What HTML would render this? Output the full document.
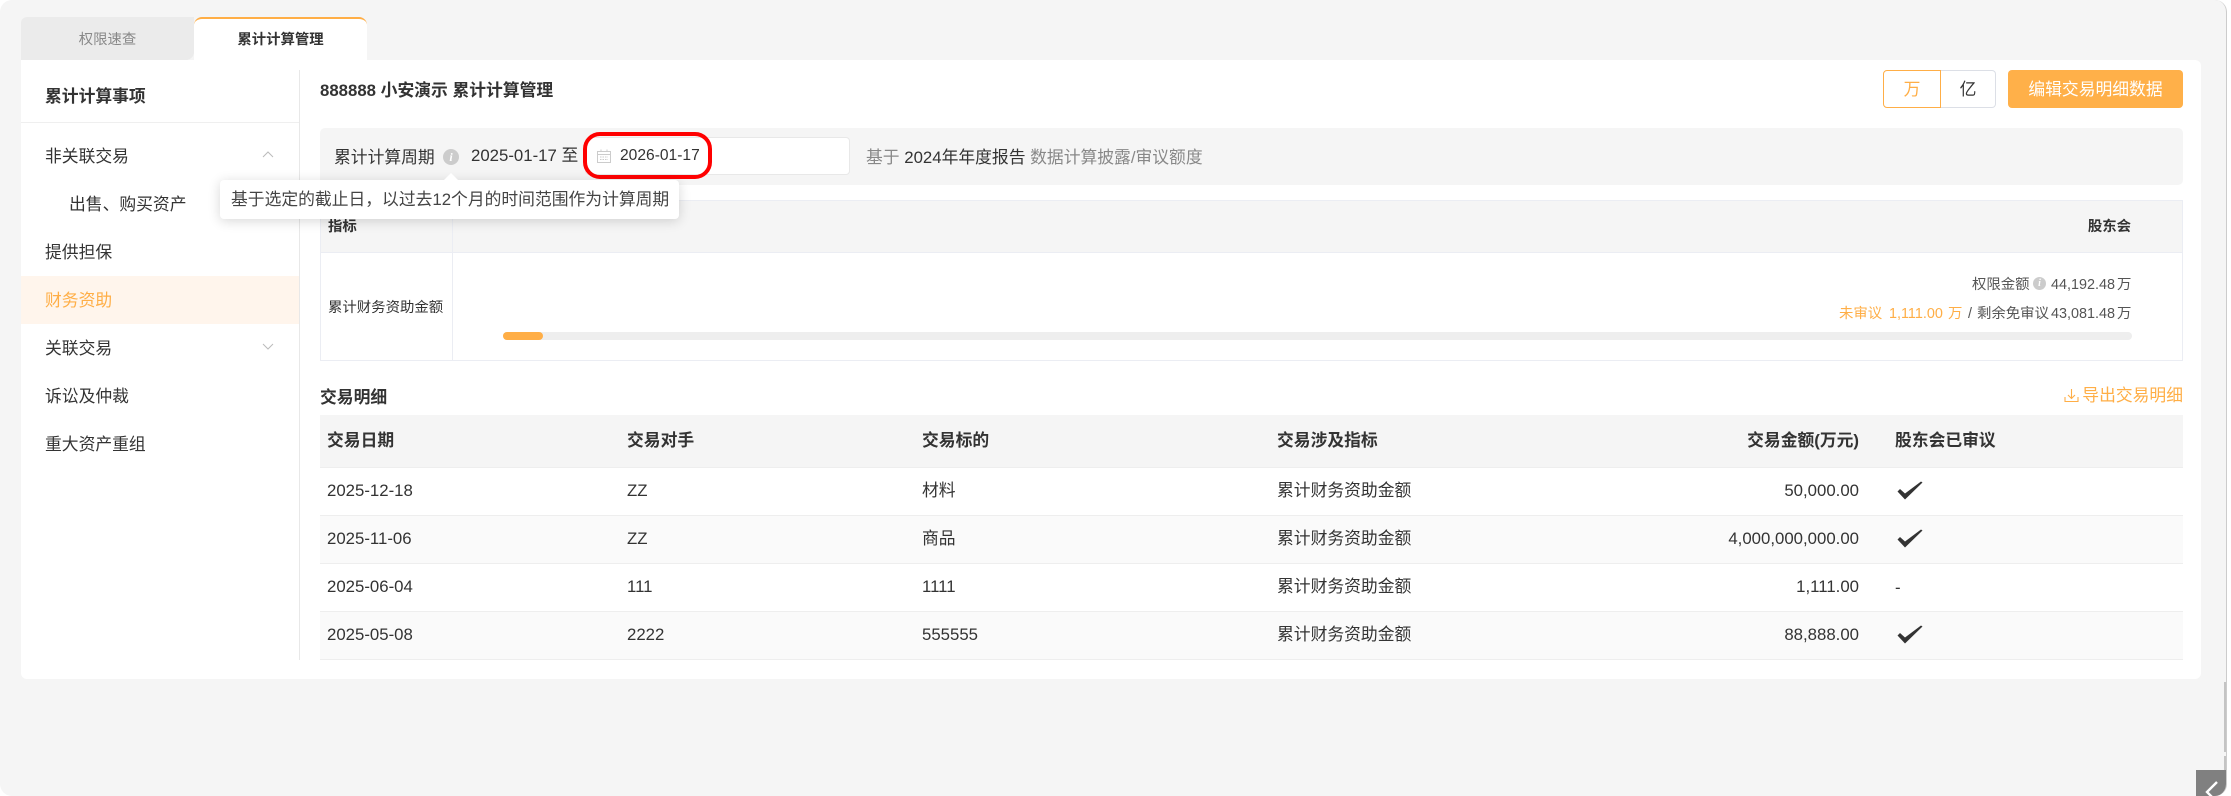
<!DOCTYPE html>
<html lang="zh-CN">
<head>
<meta charset="utf-8">
<title>累计计算管理</title>
<style>
html,body{margin:0;padding:0;background:#fff;}
body{width:2231px;height:796px;overflow:hidden;position:relative;font-family:"Liberation Sans","Noto Sans CJK SC",sans-serif;color:#333;font-size:16.8px;}
#page{position:absolute;left:0;top:0;width:2226px;height:796px;background:#f5f5f5;border-radius:12px;overflow:hidden;border-right:1px solid #ccc;box-sizing:content-box;}
.a{position:absolute;}
.t{position:absolute;white-space:nowrap;height:24px;line-height:24px;}
.b{font-weight:bold;}
.s{font-size:14.4px;}
.r{text-align:right;}
.o{color:#ffae46;}
.line{position:absolute;background:#eee;}
.info{position:absolute;width:16px;height:16px;border-radius:50%;background:#ccc;color:#fff;font:italic bold 12px/16px "Liberation Serif",serif;text-align:center;}
</style>
</head>
<body>
<div id="page">
  <!-- tabs -->
  <div class="a" style="left:194px;top:17px;width:173px;height:43px;background:#fff;border-top:2px solid #ffae46;box-sizing:border-box;border-radius:8px 8px 0 0;"></div>
  <div class="a" style="left:21px;top:17px;width:173px;height:43px;background:#ebebeb;border-radius:6px 0 8px 0;"></div>
  <div class="t s" style="left:21px;top:28px;width:173px;text-align:center;color:#888;">权限速查</div>
  <div class="t s b" style="left:194px;top:28px;width:173px;text-align:center;color:#333;">累计计算管理</div>

  <!-- card -->
  <div class="a" style="left:21px;top:60px;width:2180px;height:619px;background:#fff;border-radius:0 6px 6px 6px;"></div>

  <!-- sidebar -->
  <div class="t b" style="left:45px;top:85px;">累计计算事项</div>
  <div class="line" style="left:21px;top:122px;width:279px;height:1px;background:#efefef;"></div>
  <div class="line" style="left:299px;top:70px;width:1px;height:590px;background:#e8e8e8;"></div>
  <div class="a" style="left:21px;top:276px;width:278px;height:48px;background:#fff5ec;"></div>
  <div class="t" style="left:45px;top:145px;">非关联交易</div>
  <svg class="a" style="left:262px;top:150px;" width="12" height="9" viewBox="0 0 12 9"><path d="M1 7 L6 2 L11 7" fill="none" stroke="#bbb" stroke-width="1"/></svg>
  <div class="t" style="left:69px;top:193px;">出售、购买资产</div>
  <div class="t" style="left:45px;top:241px;">提供担保</div>
  <div class="t o" style="left:45px;top:289px;">财务资助</div>
  <div class="t" style="left:45px;top:337px;">关联交易</div>
  <svg class="a" style="left:262px;top:342px;" width="12" height="9" viewBox="0 0 12 9"><path d="M1 2 L6 7 L11 2" fill="none" stroke="#bbb" stroke-width="1"/></svg>
  <div class="t" style="left:45px;top:385px;">诉讼及仲裁</div>
  <div class="t" style="left:45px;top:433px;">重大资产重组</div>

  <!-- header -->
  <div class="t b" style="left:320px;top:79px;">888888 小安演示 累计计算管理</div>
  <div class="a" style="left:1940px;top:70px;width:56px;height:38px;border:1px solid #dcdfe6;border-left:0;box-sizing:border-box;border-radius:0 4px 4px 0;"></div>
  <div class="a" style="left:1883px;top:70px;width:58px;height:38px;border:1px solid #ffae46;box-sizing:border-box;border-radius:4px 0 0 4px;"></div>
  <div class="t o" style="left:1883px;top:78px;width:58px;text-align:center;">万</div>
  <div class="t" style="left:1940px;top:78px;width:56px;text-align:center;">亿</div>
  <div class="a" style="left:2008px;top:70px;width:175px;height:38px;background:#ffb049;border-radius:4px;"></div>
  <div class="t" style="left:2008px;top:78px;width:175px;text-align:center;color:#fff;">编辑交易明细数据</div>

  <!-- period band -->
  <div class="a" style="left:320px;top:128px;width:1863px;height:57px;background:#f5f5f5;border-radius:5px;"></div>
  <div class="t" style="left:334px;top:146px;">累计计算周期</div>
  <div class="info" style="left:443px;top:149px;">i</div>
  <div class="t" style="left:471px;top:144px;">2025-01-17 至</div>
  <div class="a" style="left:585px;top:137px;width:265px;height:38px;background:#fff;border:1px solid #e8e8e8;box-sizing:border-box;border-radius:4px;"></div>
  <svg class="a" style="left:597px;top:149px;" width="14" height="14" viewBox="0 0 14 14"><path d="M.5 2.500h13v11H.5z M.5 5.500h13" fill="none" stroke="#ccc" stroke-width="1"/><path d="M4 .5v2M10 .5v2" stroke="#ccc" stroke-width="1"/><path d="M3 8h8M3 10.500h8" stroke="#ccc" stroke-width="1" stroke-dasharray="1.500 1"/></svg>
  <div class="t" style="left:620px;top:144px;font-size:15.6px;">2026-01-17</div>
  <div class="a" style="left:583px;top:132px;width:129px;height:47px;border:4px solid #f00;box-sizing:border-box;border-radius:17px;"></div>
  <div class="t" style="left:866px;top:146px;color:#888;">基于 <span style="color:#333;">2024年年度报告</span> 数据计算披露/审议额度</div>

  <!-- indicator table -->
  <div class="a" style="left:320px;top:200px;width:1863px;height:161px;border:1px solid #ebedf3;box-sizing:border-box;"></div>
  <div class="a" style="left:321px;top:201px;width:1861px;height:51px;background:#f5f5f5;"></div>
  <div class="line" style="left:321px;top:252px;width:1861px;height:1px;background:#ebedf3;"></div>
  <div class="line" style="left:452px;top:201px;width:1px;height:159px;background:#ebedf3;"></div>
  <div class="t s b" style="left:328px;top:215px;">指标</div>
  <div class="t s b r" style="right:95px;top:215px;">股东会</div>
  <div class="t s" style="left:328px;top:296px;">累计财务资助金额</div>
  <div class="t s" style="left:1972px;top:273px;color:#555;">权限金额</div>
  <div class="info" style="left:2033px;top:277px;width:13px;height:13px;font-size:10px;line-height:13px;">i</div>
  <div class="t s" style="left:2051px;top:273px;color:#555;">44,192.48</div>
  <div class="t s" style="left:2117px;top:273px;color:#555;">万</div>
  <div class="t s o" style="left:1839px;top:302px;">未审议</div>
  <div class="t s o" style="left:1889px;top:302px;">1,111.00</div>
  <div class="t s o" style="left:1948px;top:302px;">万</div>
  <div class="t s" style="left:1968px;top:302px;color:#555;">/</div>
  <div class="t s" style="left:1977px;top:302px;color:#555;">剩余免审议</div>
  <div class="t s" style="left:2051px;top:302px;color:#555;">43,081.48</div>
  <div class="t s" style="left:2117px;top:302px;color:#555;">万</div>
  <div class="a" style="left:503px;top:332px;width:1629px;height:8px;background:#eee;border-radius:4px;"></div>
  <div class="a" style="left:503px;top:332px;width:40px;height:8px;background:#ffae46;border-radius:4px;"></div>

  <!-- details -->
  <div class="t b" style="left:320px;top:386px;">交易明细</div>
  <svg class="a" style="left:2064px;top:388px;" width="15" height="15" viewBox="0 0 15 15"><path d="M7.500 1v9M4 7l3.500 3.500L11 7M1 9v4.500h13V9" fill="none" stroke="#ffae46" stroke-width="1.100"/></svg>
  <div class="t o r" style="right:43px;top:384px;">导出交易明细</div>

  <div class="a" style="left:320px;top:415px;width:1863px;height:52px;background:#f5f5f5;"></div>
  <div class="a" style="left:320px;top:516px;width:1863px;height:47px;background:#fafafa;"></div>
  <div class="a" style="left:320px;top:612px;width:1863px;height:47px;background:#fafafa;"></div>
  <div class="line" style="left:320px;top:467px;width:1863px;height:1px;"></div>
  <div class="line" style="left:320px;top:515px;width:1863px;height:1px;"></div>
  <div class="line" style="left:320px;top:563px;width:1863px;height:1px;"></div>
  <div class="line" style="left:320px;top:611px;width:1863px;height:1px;"></div>
  <div class="line" style="left:320px;top:659px;width:1863px;height:1px;"></div>

  <div class="t b" style="left:327px;top:429px;">交易日期</div>
  <div class="t b" style="left:627px;top:429px;">交易对手</div>
  <div class="t b" style="left:922px;top:429px;">交易标的</div>
  <div class="t b" style="left:1277px;top:429px;">交易涉及指标</div>
  <div class="t b r" style="right:367px;top:429px;">交易金额(万元)</div>
  <div class="t b" style="left:1895px;top:429px;">股东会已审议</div>

  <div class="t" style="left:327px;top:479px;">2025-12-18</div>
  <div class="t" style="left:627px;top:479px;">ZZ</div>
  <div class="t" style="left:922px;top:479px;">材料</div>
  <div class="t" style="left:1277px;top:479px;">累计财务资助金额</div>
  <div class="t r" style="right:367px;top:479px;">50,000.00</div>

  <div class="t" style="left:327px;top:527px;">2025-11-06</div>
  <div class="t" style="left:627px;top:527px;">ZZ</div>
  <div class="t" style="left:922px;top:527px;">商品</div>
  <div class="t" style="left:1277px;top:527px;">累计财务资助金额</div>
  <div class="t r" style="right:367px;top:527px;">4,000,000,000.00</div>

  <div class="t" style="left:327px;top:575px;">2025-06-04</div>
  <div class="t" style="left:627px;top:575px;">111</div>
  <div class="t" style="left:922px;top:575px;">1111</div>
  <div class="t" style="left:1277px;top:575px;">累计财务资助金额</div>
  <div class="t r" style="right:367px;top:575px;">1,111.00</div>
  <div class="t" style="left:1895px;top:576px;">-</div>

  <div class="t" style="left:327px;top:623px;">2025-05-08</div>
  <div class="t" style="left:627px;top:623px;">2222</div>
  <div class="t" style="left:922px;top:623px;">555555</div>
  <div class="t" style="left:1277px;top:623px;">累计财务资助金额</div>
  <div class="t r" style="right:367px;top:623px;">88,888.00</div>

  <svg class="a" style="left:1897px;top:481px;" width="26" height="19" viewBox="0 0 26 19"><path d="M.5 10.500 L3 8 L8 12.500 L24 .5 L25.500 1.500 L8 18.500 Z" fill="#333"/></svg>
  <svg class="a" style="left:1897px;top:529px;" width="26" height="19" viewBox="0 0 26 19"><path d="M.5 10.500 L3 8 L8 12.500 L24 .5 L25.500 1.500 L8 18.500 Z" fill="#333"/></svg>
  <svg class="a" style="left:1897px;top:625px;" width="26" height="19" viewBox="0 0 26 19"><path d="M.5 10.500 L3 8 L8 12.500 L24 .5 L25.500 1.500 L8 18.500 Z" fill="#333"/></svg>

  <!-- tooltip -->
  <div class="a" style="left:220px;top:180px;width:459px;height:39px;background:#fff;border-radius:4px;box-shadow:0 2px 12px rgba(0,0,0,.16);"></div>
  <div class="a" style="left:444px;top:173px;width:0;height:0;border-left:7px solid transparent;border-right:7px solid transparent;border-bottom:7px solid #fff;"></div>
  <div class="t" style="left:231px;top:188px;color:#444;">基于选定的截止日，以过去12个月的时间范围作为计算周期</div>

  <!-- scrollbar & toggle -->
  <div class="a" style="left:2224px;top:682px;width:2px;height:70px;background:#c4c4c4;"></div>
  <div class="a" style="left:2224px;top:756px;width:2px;height:14px;background:#c4c4c4;"></div>
  <div class="a" style="left:2196px;top:770px;width:30px;height:26px;background:#808080;"></div>
  <svg class="a" style="left:2200px;top:776px;" width="24" height="20" viewBox="0 0 24 20"><path d="M17 6 L7 16 L12 21" fill="none" stroke="#fff" stroke-width="2.400"/></svg>
</div>
</body>
</html>
